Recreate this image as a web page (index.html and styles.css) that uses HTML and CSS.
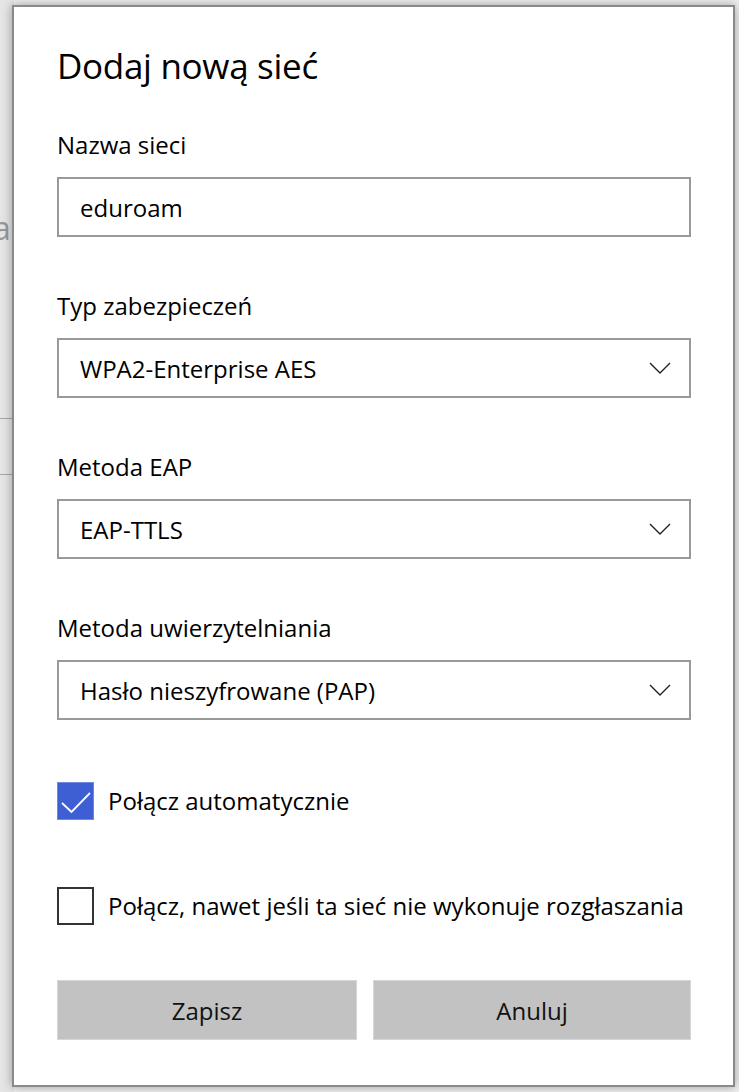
FILE: index.html
```html
<!DOCTYPE html>
<html lang="pl">
<head>
    <meta charset="UTF-8" />
    <title>Dodaj nową sieć</title>
    <link rel="stylesheet" href="styles.css">
</head>

<body>
    <div class="behind" aria-hidden="true">
        <span class="behind-letter">a</span>
        <span class="behind-line line-one"></span>
        <span class="behind-line line-two"></span>
    </div>

    <main class="dialog" role="dialog" aria-label="Dodaj nową sieć">
        <h1>Dodaj nową sieć</h1>

        <div class="field">
            <label for="ssid">Nazwa sieci</label>
            <div class="box">
                <input type="text" id="ssid" value="eduroam" spellcheck="false" />
            </div>
        </div>

        <div class="field">
            <label>Typ zabezpieczeń</label>
            <div class="box select">
                <span>WPA2-Enterprise AES</span>
                <svg class="chevron" width="22" height="12" viewBox="0 0 22 12"><path d="M1 1 L11 11 L21 1" /></svg>
            </div>
        </div>

        <div class="field">
            <label>Metoda EAP</label>
            <div class="box select">
                <span>EAP-TTLS</span>
                <svg class="chevron" width="22" height="12" viewBox="0 0 22 12"><path d="M1 1 L11 11 L21 1" /></svg>
            </div>
        </div>

        <div class="field">
            <label>Metoda uwierzytelniania</label>
            <div class="box select">
                <span>Hasło nieszyfrowane (PAP)</span>
                <svg class="chevron" width="22" height="12" viewBox="0 0 22 12"><path d="M1 1 L11 11 L21 1" /></svg>
            </div>
        </div>

        <div class="check first">
            <span class="tick on">
                <svg width="36" height="36" viewBox="0 0 36 36"><path d="M4 20 L13.5 29 L32 10" /></svg>
            </span>
            <span>Połącz automatycznie</span>
        </div>

        <div class="check">
            <span class="tick"></span>
            <span>Połącz, nawet jeśli ta sieć nie wykonuje rozgłaszania</span>
        </div>

        <div class="actions">
            <button>Zapisz</button>
            <button>Anuluj</button>
        </div>
    </main>
</body>

</html>
```

FILE: styles.css
```css
* {
    box-sizing: border-box;
}

html,
body {
    margin: 0;
    height: 100%;
    font-family: 'Open Sans', 'Noto Sans', sans-serif;
    background: #f0f0f0;
    color: #000;
}

body {
    position: relative;
    padding: 5px 4px 0 12px;
    overflow: hidden;
}

.behind {
    position: absolute;
    top: 0;
    left: 0;
    width: 14px;
    height: 100%;
    background: #e6e6e6;
}

.behind-letter {
    position: absolute;
    top: 206px;
    left: -7px;
    font-size: 32px;
    color: #999;
}

.behind-line {
    position: absolute;
    left: 0;
    width: 14px;
    height: 1px;
    background: #a8a8a8;
}

.line-one {
    top: 418px;
}

.line-two {
    top: 474px;
}

.dialog {
    position: relative;
    height: 1082px;
    background: #fff;
    border: 2px solid #8a8a8a;
    box-shadow: 0 0 10px rgba(0, 0, 0, 0.35);
    padding: 35px 42px 0 43px;
    display: flex;
    flex-direction: column;
}

h1 {
    margin: 0 0 39px;
    font-size: 35px;
    font-weight: 400;
    line-height: 48px;
    letter-spacing: -0.3px;
}

.field {
    display: flex;
    flex-direction: column;
    gap: 16px;
    margin-bottom: 53px;
}

label {
    font-size: 24px;
    line-height: 32px;
}

.box {
    height: 60px;
    border: 2px solid #999;
    display: flex;
    align-items: center;
    padding: 0 18px 0 21px;
}

.box input {
    border: none;
    outline: none;
    padding: 0;
    width: 100%;
    font: inherit;
    font-size: 24px;
    color: #000;
}

.select {
    justify-content: space-between;
    font-size: 24px;
}

.chevron path {
    fill: none;
    stroke: #222;
    stroke-width: 1.4;
}

.check {
    display: flex;
    align-items: center;
    gap: 14px;
    font-size: 24px;
    line-height: 32px;
    margin-bottom: 55px;
}

.check.first {
    margin-top: 9px;
    margin-bottom: 67px;
}

.tick {
    width: 37px;
    height: 38px;
    flex: none;
    border: 2px solid #333;
}

.tick.on {
    background: #3e5fd4;
    border: 1px solid #6f88e0;
}

.tick.on svg {
    display: block;
}

.tick.on path {
    fill: none;
    stroke: #fff;
    stroke-width: 1.8;
}

.actions {
    display: grid;
    grid-template-columns: 300px 1fr;
    gap: 16px;
}

button {
    height: 60px;
    background: #c2c2c2;
    border: 1px solid #d6d6d6;
    font: inherit;
    font-size: 24px;
    color: #111;
}
```
